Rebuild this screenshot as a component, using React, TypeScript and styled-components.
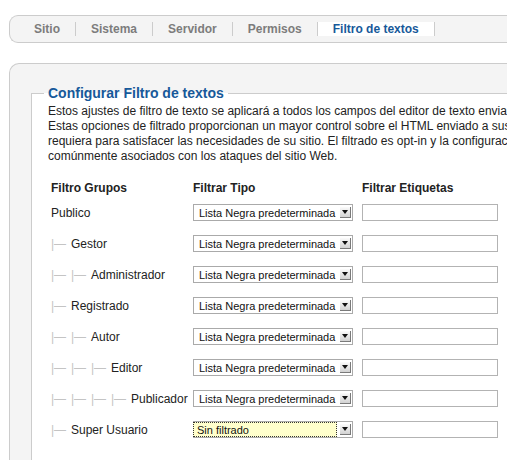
import React from 'react';
import styled, { createGlobalStyle } from 'styled-components';

const Global = createGlobalStyle`
  html, body { margin: 0; padding: 0; background: #fff; overflow: hidden; }
  body { font-family: "Liberation Sans", Arial, sans-serif; font-size: 12px; color: #222; }
`;

const Page = styled.div`
  width: 640px;
  padding: 15px 0 0 9px;
`;

const TabBar = styled.ul`
  display: flex;
  align-items: center;
  margin: 0;
  padding: 0 0 0 9px;
  height: 26px;
  list-style: none;
  background: #f4f4f4;
  border: 1px solid #ccc;
  border-right: none;
  border-radius: 9px 0 0 9px;
`;

const Tab = styled.li<{ $active?: boolean }>`
  height: 14px;
  line-height: 14px;
  padding: 0 15px;
  border-right: 1px solid #ccc;
  font-weight: bold;
  font-size: 12px;
  color: ${(p) => (p.$active ? '#17599a' : '#7c7c7c')};
  background: ${(p) => (p.$active ? '#fff' : 'transparent')};
`;

const Panel = styled.div`
  margin-top: 20px;
  height: 480px;
  background: #f4f4f4;
  border: 1px solid #ccc;
  border-right: none;
  border-bottom: none;
  border-radius: 10px 0 0 0;
  padding: 21px 0 0 21px;
`;

const Fieldset = styled.fieldset`
  margin: 0;
  padding: 0 0 30px 12px;
  border: 1px solid #ccc;
  border-right: none;
  background: #fff;
  min-width: 0;
`;

const Legend = styled.legend`
  padding: 0 4px;
  font-weight: bold;
  font-size: 14px;
  color: #17599a;
`;

const Body = styled.div`
  padding-left: 4px;
`;

const Intro = styled.p`
  margin: 3px 0 0;
  line-height: 15px;
  white-space: nowrap;
  color: #222;
`;

const Table = styled.div`
  margin: 14px 0 0 3px;
  display: flex;
  flex-direction: column;
`;

const HeaderRow = styled.div`
  display: grid;
  grid-template-columns: 142px 169px 140px;
  height: 19px;
  align-items: center;
  font-weight: bold;
  color: #222;
`;

const Row = styled.div`
  display: grid;
  grid-template-columns: 142px 169px 140px;
  height: 31px;
  align-items: center;
`;

const GroupLabel = styled.div`
  display: flex;
  align-items: center;
  white-space: nowrap;
  color: #222;
`;

const Connector = styled.span`
  display: inline-block;
  width: 20px;
  color: #c4c4c4;
  font-size: 12px;
  white-space: nowrap;
`;

const SelectBox = styled.div`
  width: 160px;
  height: 17px;
  box-sizing: border-box;
  border: 1px solid #aaa;
  background: #fff;
  display: flex;
  align-items: center;
  font-family: "Liberation Sans", Arial, sans-serif;
  font-size: 11px;
  color: #111;
`;

const SelectValue = styled.div<{ $focused?: boolean }>`
  flex: 1;
  height: 100%;
  box-sizing: border-box;
  display: flex;
  align-items: center;
  padding-left: ${(p) => (p.$focused ? '3px' : '4px')};
  margin-right: 3px;
  background: ${(p) => (p.$focused ? '#ffffcc' : 'transparent')};
  border: ${(p) => (p.$focused ? '1px dotted #333' : '1px solid transparent')};
  margin-left: ${(p) => (p.$focused ? '-1px' : '0')};
  white-space: nowrap;
`;

const ArrowBox = styled.div`
  width: 11px;
  height: 11px;
  box-sizing: border-box;
  margin-right: 1px;
  background: linear-gradient(#fbfbfb, #d2d2d2);
  border-right: 1px solid #7a7a7a;
  border-bottom: 1px solid #7a7a7a;
  display: flex;
  align-items: center;
  justify-content: center;

  &::after {
    content: '';
    border-left: 3px solid transparent;
    border-right: 3px solid transparent;
    border-top: 4px solid #111;
  }
`;

const TextInput = styled.input`
  width: 136px;
  height: 17px;
  box-sizing: border-box;
  border: 1px solid #b3b3b3;
  background: #fff;
  margin: 0;
  padding: 0 3px;
  font-size: 11px;
`;

type Group = { name: string; level: number; value: string; focused?: boolean };

const groups: Group[] = [
  { name: 'Publico', level: 0, value: 'Lista Negra predeterminada' },
  { name: 'Gestor', level: 1, value: 'Lista Negra predeterminada' },
  { name: 'Administrador', level: 2, value: 'Lista Negra predeterminada' },
  { name: 'Registrado', level: 1, value: 'Lista Negra predeterminada' },
  { name: 'Autor', level: 2, value: 'Lista Negra predeterminada' },
  { name: 'Editor', level: 3, value: 'Lista Negra predeterminada' },
  { name: 'Publicador', level: 4, value: 'Lista Negra predeterminada' },
  { name: 'Super Usuario', level: 1, value: 'Sin filtrado', focused: true },
];

const tabs = ['Sitio', 'Sistema', 'Servidor', 'Permisos', 'Filtro de textos'];

export default function App() {
  return (
    <>
      <Global />
      <Page>
        <TabBar>
          {tabs.map((t) => (
            <Tab key={t} $active={t === 'Filtro de textos'}>
              {t}
            </Tab>
          ))}
        </TabBar>
        <Panel>
          <Fieldset>
            <Legend>Configurar Filtro de textos</Legend>
            <Body>
              <Intro>
                Estos ajustes de filtro de texto se aplicará a todos los campos del editor de texto enviados por los usuarios en los grupos seleccionados.
                <br />
                Estas opciones de filtrado proporcionan un mayor control sobre el HTML enviado a sus usuarios. Puede ser tan estricto o liberal como
                <br />
                requiera para satisfacer las necesidades de su sitio. El filtrado es opt-in y la configuración predeterminada proporciona una buena protección
                <br />
                comúnmente asociados con los ataques del sitio Web.
              </Intro>
              <Table>
                <HeaderRow>
                  <div>Filtro Grupos</div>
                  <div>Filtrar Tipo</div>
                  <div>Filtrar Etiquetas</div>
                </HeaderRow>
                {groups.map((g) => (
                  <Row key={g.name}>
                    <GroupLabel>
                      {Array.from({ length: g.level }).map((_, i) => (
                        <Connector key={i}>|—</Connector>
                      ))}
                      {g.name}
                    </GroupLabel>
                    <SelectBox>
                      <SelectValue $focused={g.focused}>{g.value}</SelectValue>
                      <ArrowBox />
                    </SelectBox>
                    <TextInput defaultValue="" />
                  </Row>
                ))}
              </Table>
            </Body>
          </Fieldset>
        </Panel>
      </Page>
    </>
  );
}
